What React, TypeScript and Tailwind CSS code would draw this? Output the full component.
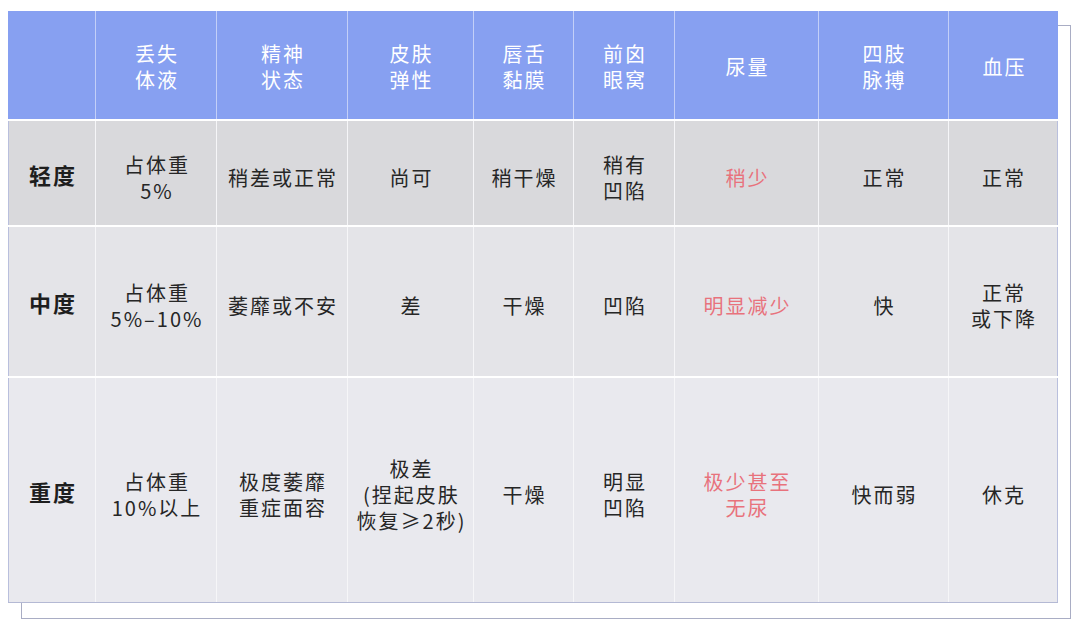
const cols = ["", "丢失\n体液", "精神\n状态", "皮肤\n弹性", "唇舌\n黏膜", "前囟\n眼窝", "尿量", "四肢\n脉搏", "血压"];

interface Row {
  label: string;
  height: string;
  bg: string;
  cells: string[];
}

const rows: Row[] = [
  {
    label: "轻度",
    height: "h-[106px]",
    bg: "bg-[#d9d9dc]",
    cells: ["占体重\n5%", "稍差或正常", "尚可", "稍干燥", "稍有\n凹陷", "稍少", "正常", "正常"],
  },
  {
    label: "中度",
    height: "h-[151px]",
    bg: "bg-[#e4e4e8]",
    cells: ["占体重\n5%–10%", "萎靡或不安", "差", "干燥", "凹陷", "明显减少", "快", "正常\n或下降"],
  },
  {
    label: "重度",
    height: "h-[227px] border-b border-b-[#b4b9d4]",
    bg: "bg-[#e9e9ee]",
    cells: ["占体重\n10%以上", "极度萎靡\n重症面容", "极差\n(捏起皮肤\n恢复≥2秒)", "干燥", "明显\n凹陷", "极少甚至\n无尿", "快而弱", "休克"],
  },
];

const grid =
  "grid grid-cols-[87px_121px_131px_126px_100px_101px_144px_130px_110px]";

export default function App() {
  return (
    <div
      className="w-[1080px] h-[630px] bg-white pt-[25px] pl-[21px]"
      style={{ fontFamily: '"Noto Sans CJK SC", "Noto Sans", sans-serif' }}
    >
      <div className="w-[1050px] h-[594px] border border-[#a9adc4] bg-white">
        <div className="-ml-[14px] -mt-[15px] w-[1050px]">
          {/* header */}
          <div className={`${grid} h-[108px] bg-[#87a0f1]`}>
            {cols.map((c, i) => (
              <div
                key={i}
                className={`flex items-center justify-center whitespace-pre-line text-center pt-[4px] pl-[2px] text-[20px] leading-[26px] tracking-[2px] text-white ${
                  i > 0 ? "border-l border-[#c3cff8]" : ""
                }`}
              >
                {c}
              </div>
            ))}
          </div>

          {/* body */}
          {rows.map((r) => (
            <div
              key={r.label}
              className={`${grid} ${r.height} ${r.bg} border-t-2 border-t-white`}
            >
              <div className="flex items-center justify-center pt-[2px] pl-[2px] text-[22px] font-bold tracking-[2px] text-[#1e1e1e] border-l border-[#b9bfdd]">
                {r.label}
              </div>
              {r.cells.map((c, i) => (
                <div
                  key={i}
                  className={`flex items-center justify-center whitespace-pre-line text-center pt-[9px] pl-[2px] text-[20px] leading-[26px] tracking-[2px] border-l border-[#f6f6f8] ${
                    i === 5 ? "text-[#e8727c]" : "text-[#262626]"
                  } ${i === 7 ? "border-r border-r-[#b9bfdd]" : ""}`}
                >
                  {c}
                </div>
              ))}
            </div>
          ))}
        </div>
      </div>
    </div>
  );
}
